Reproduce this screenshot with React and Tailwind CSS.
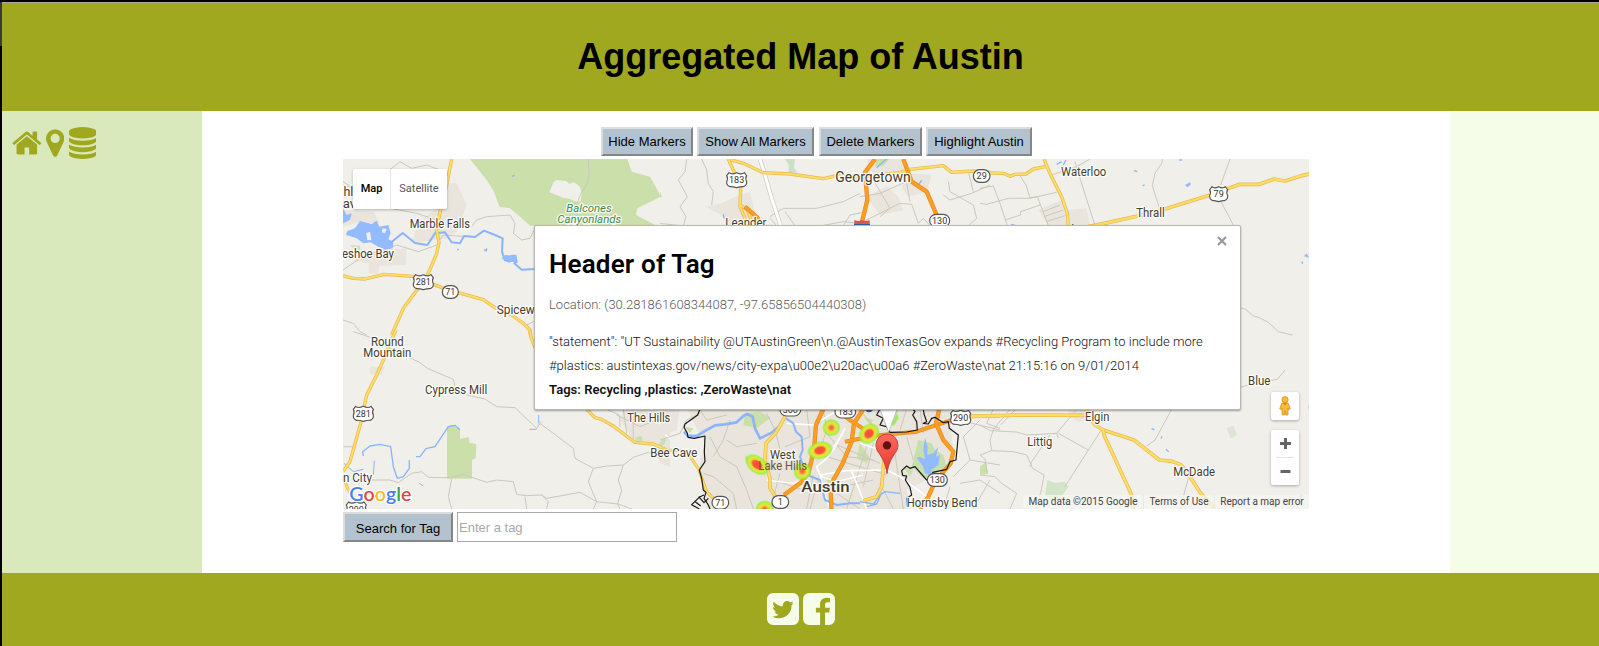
import React from "react";

const ICONS = {
  home: {
    box: "64 0 1664 1792",
    d: "M1472 992v480q0 26-19 45t-45 19h-384v-384h-256v384h-384q-26 0-45-19t-19-45v-480q0-1 .5-3t.5-3l575-474 575 474q1 2 1 6zm223-69l-62 74q-8 9-21 11h-3q-13 0-21-7l-692-577-692 577q-12 8-24 7-13-2-21-11l-62-74q-8-10-7-23.5t11-21.5l719-599q32-26 76-26t76 26l244 204v-195q0-14 9-23t23-9h192q14 0 23 9t9 23v408l219 182q10 8 11 21.5t-7 23.5z",
  },
  marker: {
    box: "384 0 1024 1792",
    d: "M1152 640q0-106-75-181t-181-75-181 75-75 181 75 181 181 75 181-75 75-181zm256 0q0 109-33 179l-364 774q-16 33-47.5 52t-67.5 19-67.5-19-46.5-52l-365-774q-33-70-33-179 0-212 150-362t362-150 362 150 150 362z",
  },
  database: {
    box: "128 0 1536 1792",
    d: "M896 768q237 0 443-43t325-127v170q0 69-103 128t-280 93.5-385 34.5-385-34.5-280-93.5-103-128v-170q119 84 325 127t443 43zm0 768q237 0 443-43t325-127v170q0 69-103 128t-280 93.5-385 34.5-385-34.5-280-93.5-103-128v-170q119 84 325 127t443 43zm0-384q237 0 443-43t325-127v170q0 69-103 128t-280 93.5-385 34.5-385-34.5-280-93.5-103-128v-170q119 84 325 127t443 43zm0-1152q208 0 385 34.5t280 93.5 103 128v128q0 69-103 128t-280 93.5-385 34.5-385-34.5-280-93.5-103-128v-128q0-69 103-128t280-93.5 385-34.5z",
  },
  twitter: {
    box: "128 128 1536 1536",
    d: "M1408 610q-56 25-121 34 68-40 93-117-65 38-134 51-61-66-153-66-87 0-148.5 61.5t-61.5 148.5q0 29 5 48-129-7-242-65t-192-155q-29 50-29 106 0 114 91 175-47-1-100-26v2q0 75 50 133.5t123 72.5q-29 8-51 8-13 0-39-4 21 63 74.5 104t121.5 42q-116 90-261 90-26 0-50-3 148 94 322 94 112 0 210-35.5t168-95 120.5-137 75-162 24.5-168.5q0-18-1-27 63-45 105-109zm256-194v960q0 119-84.5 203.5t-203.5 84.5h-960q-119 0-203.5-84.5t-84.5-203.5v-960q0-119 84.5-203.5t203.5-84.5h960q119 0 203.5 84.5t84.5 203.5z",
  },
  facebook: {
    box: "128 128 1536 1536",
    d: "M1376 128q119 0 203.5 84.5t84.5 203.5v960q0 119-84.5 203.5t-203.5 84.5h-188v-595h199l30-232h-229v-148q0-56 23.5-84t91.5-28l122-1v-207q-63-9-178-9-136 0-217.5 80t-81.5 226v171h-200v232h200v595h-532q-119 0-203.5-84.5t-84.5-203.5v-960q0-119 84.5-203.5t203.5-84.5h960z",
  },
};

function Icon({ name, className }) {
  return (
    <svg viewBox={ICONS[name].box} className={className} fill="currentColor">
      <path d={ICONS[name].d} />
    </svg>
  );
}

function Button({ children, className }) {
  return (
    <button
      className={
        "shrink-0 whitespace-nowrap border-2 border-t-[#dcdcdc] border-l-[#dcdcdc] border-r-[#868686] border-b-[#868686] bg-[#b2c3cf] text-center text-[13px] leading-none text-black " +
        className
      }
    >
      {children}
    </button>
  );
}

/* ---- map drawing helpers; the drawing uses three units per pixel ---- */

const Minor = ({ d, w = 3 }) => <path d={d} fill="none" stroke="#cdc8be" strokeWidth={w} strokeLinejoin="round" />;
const White = ({ d, w = 6 }) => <path d={d} fill="none" stroke="#ffffff" strokeWidth={w} strokeLinejoin="round" />;
const Water = ({ d, w = 5 }) => <path d={d} fill="none" stroke="#8ab4fb" strokeWidth={w} strokeLinejoin="round" />;
const Lake = ({ d }) => <path d={d} fill="#93bbff" />;
const Park = ({ d, fill = "#cadfaa" }) => <path d={d} fill={fill} />;
const Town = ({ d }) => <path d={d} fill="#e9e4dc" />;

function Road({ d, w = 10 }) {
  return (
    <g fill="none" strokeLinejoin="round">
      <path d={d} stroke="#e6b84f" strokeWidth={w} />
      <path d={d} stroke="#ffdc65" strokeWidth={w - 4} />
    </g>
  );
}

function Freeway({ d, w = 13 }) {
  return (
    <g fill="none" strokeLinejoin="round">
      <path d={d} stroke="#ea8a1b" strokeWidth={w} />
      <path d={d} stroke="#fa9e25" strokeWidth={w - 4} />
    </g>
  );
}

function Label({ x, y, w, size = 36, children, fill = "#453c2c", weight = 400, italic, anchor = "start" }) {
  return (
    <text
      x={x}
      y={y}
      textLength={w}
      lengthAdjust="spacingAndGlyphs"
      fontSize={size}
      fill={fill}
      fontWeight={weight}
      fontStyle={italic ? "italic" : "normal"}
      textAnchor={anchor}
      stroke="#ffffff"
      strokeOpacity="0.85"
      strokeWidth="8"
      strokeLinejoin="round"
      paintOrder="stroke"
    >
      {children}
    </text>
  );
}

function Oval({ x, y, w = 56, h = 38, children }) {
  return (
    <g>
      <rect x={x - w / 2} y={y - h / 2} width={w} height={h} rx={h / 2} fill="#fff" stroke="#555" strokeWidth="3.5" />
      <text x={x} y={y + 9} fontSize="27" fill="#333" textAnchor="middle">
        {children}
      </text>
    </g>
  );
}

function Shield({ x, y, w = 60, children }) {
  const a = w / 2;
  return (
    <g>
      <path
        transform={`translate(${x} ${y})`}
        d={`M${-a + 7} -22 Q${-a / 2} -15 0 -22 Q${a / 2} -15 ${a - 7} -22 L${a} -13 Q${a - 5} -5 ${a} 5 Q${a + 1} 16 ${a - 10} 20 Q${a / 2} 19 0 23 Q${-a / 2} 19 ${-a + 10} 20 Q${-a - 1} 16 ${-a} 5 Q${-a + 5} -5 ${-a} -13 Z`}
        fill="#fff"
        stroke="#555"
        strokeWidth="3.5"
      />
      <text x={x} y={y + 10} fontSize="27" fill="#333" textAnchor="middle">
        {children}
      </text>
    </g>
  );
}

const Heat = ({ x, y, rx = 26, ry = 26, r = 0, small }) => (
  <ellipse cx="0" cy="0" rx={rx} ry={ry} fill={small ? "url(#heatSmall)" : "url(#heat)"} transform={`translate(${x} ${y}) rotate(${r})`} />
);

function NorthWest() {
  return (
    <g transform="translate(-9 -12)">
      <Town d="M300 85L350 85L380 150L350 230L320 250L215 265L235 205L300 150Z" />
      <Town d="M9 165L100 170L120 205L60 200L9 215Z" />
      <Town d="M140 285L200 280L198 330L118 333L115 355L86 355L86 325L40 318L80 290Z" />
      <Park d="M390 12H862L875 50L930 65L955 110L962 125L892 160L888 180L950 212H570L545 190L510 160L478 155L462 110L440 75Z" />
      <path d="M628 112L640 82L650 75L678 78L688 86L703 82L720 95L725 120L722 138L712 142L690 132L668 128L655 122Z" fill="#f0efea" />
      <Minor d="M745 12L748 60L742 85L722 118L712 142L700 150L710 180L720 200" />
      <Minor d="M9 90L70 110M130 60L180 20L215 40L260 30L300 45M9 80L40 100M100 150L230 175L290 195" />
      <Minor d="M395 215L410 195L440 185L510 180L525 205L520 235L545 255L570 250L585 220" />
      <Minor d="M9 345L60 310L170 270L235 290L290 270L310 240L380 245" />
      <Minor d="M9 495L40 505L60 530L80 540M560 510L590 495" />
      <Lake d="M9 160L20 180L35 175L30 195L9 205ZM45 220L60 198L95 207L110 197L118 215L145 210L152 235L145 252L160 262L158 280L138 284L115 275L92 262L70 265L50 250L18 240L22 228Z" />
      <path d="M78 235L90 230L94 255L82 256ZM128 220L140 222L135 235L125 232Z" fill="#f0efea" />
      <Park d="M30 270L60 272L62 290L45 285Z" fill="#cbdfc9" />
      <Water w={6} d="M150 265L188 234L225 264L262 270L285 235L315 232L335 262L360 265L372 243L405 246L432 227L465 240L488 250L486 290L494 315L508 320L514 303L526 302L530 320L523 325L545 344L585 342" />
      <Lake d="M494 300L530 302L530 322L508 320L485 310L470 320L490 305Z" />
      <Water w={4} d="M352 286L356 282M432 286L440 282L438 290M516 64L524 61M582 450L586 446" />
      <Road d="M335 12L320 90L298 180L290 225L297 262L290 295L265 355L235 400L190 460L155 540" />
      <Road d="M9 362L40 370L75 372L132 358L220 364L280 388L320 403L430 434L468 460L515 480L550 505L570 525L572 540" />
    </g>
  );
}

function SouthWest() {
  return (
    <g transform="translate(-9 513)">
      <Town d="M90 110L135 110L125 135L90 132Z" />
      <Town d="M595 268L612 275L595 290L590 285Z" />
      <Town d="M850 238H990V410L960 400L950 340L880 330L840 270Z" />
      <Park d="M321 290L335 285L360 300V326L387 322L388 338L409 343L407 385L396 390V446H321Z" />
      <Minor d="M40 5L100 25L160 60L240 98L262 115L340 148L346 175L380 195L435 207L470 230L525 233L590 295L600 280L700 355L705 385L760 415L800 408L850 405L880 382L925 367L960 385" />
      <Minor d="M9 350L45 350M96 450L150 450L175 458L215 430L245 425L265 442L330 443L370 433L440 457L470 450L520 455L530 493L560 497L605 495L620 505L720 487L770 515L835 522L875 537" />
      <Minor d="M335 447L325 500L335 537M555 500L560 537M605 495L625 515L620 537M760 415L745 455L770 515L760 537M850 405L835 450L845 480L833 522L840 537" />
      <Water w={4} d="M70 378L68 365L90 348L120 343L152 350L160 410L172 445L190 440L208 415L208 390" />
      <Water w={4} d="M228 380L240 380L258 356L285 350L325 290L345 286L360 300" />
      <Water w={3} d="M103 392L100 435M12 400L40 425L70 418M238 460L250 468M596 255V280M568 298H590" />
      <Minor d="M800 238L838 255L840 290M850 238L860 310M880 238V330M830 255L900 290L950 270" w={3} />
      <Park d="M885 322L905 318L908 332L890 335ZM955 345L970 325L980 330L965 352Z" fill="#c7e0b3" />
      <Road d="M168 0L145 50L135 80L110 135L80 195L70 240L62 280L30 395L9 425" />
      <Road d="M9 440L25 480L45 510L65 537" w={9} />
      <Road d="M568 0L574 25L588 60M740 238L765 263L785 268L820 288L885 337L940 342L990 365" />
      <White d="M975 250L960 280L970 310L990 325" w={5} />
    </g>
  );
}

function North() {
  return (
    <g transform="translate(951 -12)">
      <Town d="M185 145L215 130L270 110L280 155L300 212H205L185 180L135 155Z" />
      <Town d="M620 12H730L745 45L640 60ZM620 125L680 95L715 125L730 165L660 180ZM745 55L815 60L800 110L745 125L725 100Z" />
      <Park d="M375 12H405L402 40L412 52L385 55L386 30Z" fill="#cbdfc9" />
      <Park d="M650 12H688L670 32L645 35ZM0 110L6 125L0 128Z" />
      <Minor d="M80 12L75 50L55 75L82 125L60 155L78 185L70 212M125 12L140 45L145 85L160 110L155 150" />
      <Minor d="M0 205L60 212M330 185L370 160L470 160L550 140L600 115M330 190L350 212M375 170L405 212M485 212L550 200L600 205L720 145L755 148L775 205L790 190L810 212" />
      <Minor d="M735 55L750 140M640 75L690 160L660 185M600 125L660 115L740 80M990 90L935 115L870 135L850 120M865 80L870 110L940 150L950 190L925 212M925 50L940 110M550 212L570 180L620 170" />
      <Minor d="M300 12L312 50L335 130L362 212" w={13} />
      <White d="M300 12L312 50L335 130L362 212" w={9} />
      <Water w={4} d="M650 38L672 18L680 12M190 178L192 190M775 90L785 76" />
      <Road d="M202 12L250 25L310 53L390 57L490 71L530 62L600 68L720 52L750 43L850 32L875 52L940 48L990 52" />
      <Road d="M205 12L222 50L242 100L240 155L255 190L258 212M242 150L262 165L280 212" />
      <Freeway d="M255 155L292 188L300 205" />
      <Freeway d="M645 12L615 52L622 135L606 200" />
      <Freeway d="M730 12L742 45L755 80L800 110L832 185" />
    </g>
  );
}

function NorthEast() {
  return (
    <g transform="translate(1911 -12)">
      <Town d="M175 165L245 135L260 165L320 160L330 212H205Z" />
      <Minor d="M0 100L40 93L60 145L82 212M0 145L20 148L85 130L150 130L230 112M75 195L122 180L122 170L180 150M120 62L138 90L150 128L172 125L205 212M215 60L290 35L330 12M285 20L300 70L338 190L345 212" />
      <Minor d="M548 12L545 25L525 55L517 92L540 165M750 12L722 90M722 138L760 210M190 170L240 150M192 185L250 165M198 200L255 182" />
      <Minor d="M780 458L797 463L818 482L838 488L865 502L895 530L938 540" />
      <Water w={4} d="M462 47L472 50M488 92L494 90M598 15L606 15M230 28L245 20M258 15L250 30M965 320L968 326M495 213H502" />
      <Lake d="M615 90L630 82L633 88L622 97ZM972 303L980 295L987 308L978 306ZM90 212L96 206L108 210L105 214Z" />
      <Road d="M0 52L70 55L90 64L105 58L138 57L160 42L195 35" />
      <Road d="M192 12L212 60L245 125L262 175L265 212" />
      <Road d="M325 215L360 208L470 184L555 162L690 120M740 102L780 88L838 88L882 72L915 78L965 62L990 57" w={11} />
    </g>
  );
}

function SouthEast() {
  return (
    <g transform="translate(1911 633)">
      <Town d="M260 110L330 118L325 150L295 155L270 140Z" />
      <Park d="M740 175L760 166L771 195L752 206Z" fill="#dce6d3" />
      <Park d="M202 330L225 338L255 335L265 350L230 400L195 375Z" fill="#d3e5c8" />
      <Park d="M0 290L18 275L24 312L0 315Z" />
      <Minor d="M0 165L30 182L110 186L140 195L230 190L235 205M40 180L55 160L90 118M105 120L62 165M235 190L325 240M230 190L290 118M210 195L155 275L150 290M0 255L35 242L100 245L140 255L158 295L192 315L185 355L170 417" />
      <Minor d="M325 240L365 178M325 240L255 350M35 242L30 210L40 180M0 315L45 320L65 340L110 370L90 417M15 270L22 310M0 255L18 270" />
      <Minor d="M575 118L525 210L500 228M625 325L610 380L600 417M780 52L805 45M870 32L892 28L915 0M987 105V118" />
      <Water w={4} d="M515 175L523 180M543 205L546 200M558 238L566 245M960 378H968" />
      <Road d="M0 138L120 135L325 136M318 118L330 145L345 165L370 180L462 210L538 270L577 274L602 284L625 312L660 367L705 417" w={11} />
      <Road d="M370 180L372 195L455 375L460 417" w={11} />
    </g>
  );
}

function Austin() {
  return (
    <g transform="translate(951 723)">
      <Town d="M80 27H870L880 180L800 240L740 270L750 327H140L115 210L135 130Z" />
      <Town d="M0 27H60L50 90L0 110Z" />
      <Park d="M255 40L300 35L332 52L290 85L250 75ZM600 130L628 170L620 190L590 175ZM690 27H715L705 75L690 70ZM500 240L520 230L530 265L505 260ZM75 80L100 85L90 100ZM730 200L760 210L750 230ZM255 165L270 180L260 195ZM610 50L640 60L630 75Z" />
      <Park d="M775 120L815 130L825 150L850 165L860 200L820 230L790 235L755 200L760 180Z" fill="#c6dfae" />
      <Minor w={3} d="M0 120L60 100L80 60L120 40M120 30L140 60L200 45M200 120L230 140L290 130M150 110L180 170L230 200L260 270L280 327M210 60L190 120L160 170M230 327L220 280L160 230L130 220M330 327L360 220" />
      <Minor w={3} d="M320 40L345 90L365 165M375 140L450 110M340 240L430 270M490 27L500 90L480 150M530 27L570 70M600 30L650 90M440 27L450 110M500 170L680 225M520 130L660 190M500 270L640 240M530 280L600 327M620 140L560 327M700 130L730 327M740 110L760 180M640 130L610 260M660 250L700 327M740 27L720 90M780 27L790 100M480 220L450 327M460 225L440 327M500 100L560 170L640 180" />
      <Minor w={3} d="M895 60L1020 90M880 230L930 180L1020 195M930 180L910 110L960 60M900 250L960 240L1020 280M870 260L850 327M940 327L990 240M1000 27L980 70L1020 85" />
      <White d="M380 70L460 75L540 27M555 85L520 150L500 175L470 200L480 225L560 212L680 210L720 230L760 260L800 290M480 225L490 270L510 327M540 115L520 140M575 215L610 300L620 327M600 130L660 150" w={5} />
      <White d="M470 205L485 230L530 245L610 225M320 240L400 250L450 230" w={4} />
      <Water w={8} d="M72 95L82 107L110 108L140 90L165 76L195 73L230 67L250 48L262 42L278 50L285 85L300 115L335 98L365 72" />
      <Water w={6} d="M378 55L400 70L408 95L425 110L428 150L420 170L430 200L440 225" />
      <Water w={6} d="M440 225L480 240L495 300L530 315L570 310L600 310" />
      <Water w={4} d="M650 300L660 285L675 275L720 280M665 278L650 312L620 320M600 305L640 312L650 300" />
      <Lake d="M795 113L803 140L802 165L820 160L835 140L828 170L840 165L835 195L815 210L812 225L795 220L790 200L775 180L770 172L782 172L795 178L790 150Z" />
      <Road d="M0 150L60 152L90 170L115 205L140 275L165 300L185 327" w={9} />
      <Road d="M375 50L350 95L318 130L315 180L330 235L330 265L350 295" w={11} />
      <Road d="M672 180L665 260L650 290L610 302" w={11} />
      <Freeway d="M490 27L468 75L462 150L445 220L420 250L372 285" />
      <Freeway d="M610 27L582 70L575 125L548 190L520 240L512 265L514 327" />
      <Freeway d="M555 50L600 80L620 95M555 125L640 108L690 102L765 96L870 62L895 56" w={12} />
      <Freeway d="M838 27L828 70L850 120L880 155L872 190L825 245L805 290L780 327" w={13} />
      <Road d="M930 49L1020 47" w={12} />
      <g fill="none" stroke="#151515" strokeWidth="3.500" strokeLinejoin="round">
        <path d="M120 27L113 45L75 72L72 82L82 100L84 112L103 115L135 108L133 155L135 185L118 210L125 235L130 270L138 277L132 295L145 315L150 327" />
        <path d="M132 285L120 290L95 314L118 327M116 290L132 308L145 295M104 304L122 318" />
        <path d="M660 27L650 45L670 55L660 75L680 80L690 97L740 96L772 90L770 65L758 45L765 35L758 27" />
        <path d="M790 27L792 42L800 65L790 70L805 72L815 55L825 52L850 68L865 65L868 85L895 105L888 180L870 185L860 208L818 217L820 225L800 240L765 200L750 205L740 198L725 212L728 226L740 228L736 240L750 262L755 285L740 295L742 320" />
      </g>
      <circle cx="627" cy="24" r="13" fill="#2d5da8" />
    </g>
  );
}

function MapArt() {
  return (
    <svg viewBox="0 0 2898 1050" className="block h-[350px] w-[966px]" fontFamily="Roboto, sans-serif">
      <defs>
        <radialGradient id="heat">
          <stop offset="0" stopColor="#f84a38" />
          <stop offset="0.34" stopColor="#f65a36" />
          <stop offset="0.5" stopColor="#f3d23a" />
          <stop offset="0.66" stopColor="#d8ee34" />
          <stop offset="0.82" stopColor="#98f02e" stopOpacity="0.8" />
          <stop offset="1" stopColor="#7df02e" stopOpacity="0" />
        </radialGradient>
        <radialGradient id="heatSmall">
          <stop offset="0" stopColor="#f65a40" />
          <stop offset="0.2" stopColor="#f57a3c" />
          <stop offset="0.4" stopColor="#efd144" />
          <stop offset="0.62" stopColor="#d0ee3a" />
          <stop offset="0.82" stopColor="#8ff02e" stopOpacity="0.8" />
          <stop offset="1" stopColor="#7df02e" stopOpacity="0" />
        </radialGradient>
        <linearGradient id="pin" x1="0" y1="0" x2="0" y2="1">
          <stop offset="0" stopColor="#fb6a5f" />
          <stop offset="1" stopColor="#e8362e" />
        </linearGradient>
      </defs>
      <rect width="2898" height="1050" fill="#f0efea" />
      <NorthWest />
      <SouthWest />
      <North />
      <NorthEast />
      <SouthEast />
      <Austin />

      <g transform="translate(-9 -12)">
        <Label x={-20} y={122} w={60}>ighl</Label>
        <Label x={8} y={158} w={40}>av</Label>
        <Label x={209} y={220} w={181}>Marble Falls</Label>
        <Label x={6} y={309} w={156}>eshoe Bay</Label>
        <Label x={470} y={477} w={175}>Spicewood</Label>
        <Label x={679} y={171} w={136} size={35} italic fill="#3f8b4a">Balcones</Label>
        <Label x={652} y={203} w={192} size={35} italic fill="#3f8b4a">Canyonlands</Label>
        <Label x={677} y={235} w={145} size={35} italic fill="#3f8b4a">National</Label>
        <Shield x={250} y={381}>281</Shield>
        <Oval x={331} y={411} w={48}>71</Oval>
      </g>
      <g transform="translate(-9 513)">
        <Label x={93} y={48} w={98}>Round</Label>
        <Label x={70} y={81} w={144}>Mountain</Label>
        <Label x={255} y={192} w={187}>Cypress Mill</Label>
        <Label x={862} y={276} w={129}>The Hills</Label>
        <Label x={931} y={381} w={141}>Bee Cave</Label>
        <Label x={9} y={456} w={87}>n City</Label>
        <Shield x={70} y={251}>281</Shield>
        <Shield x={49} y={538}>290</Shield>
      </g>
      <g transform="translate(951 -12)">
        <Label x={526} y={80} w={226} size={42}>Georgetown</Label>
        <Label x={196} y={216} w={123}>Leander</Label>
        <Shield x={230} y={75}>183</Shield>
        <Oval x={965} y={63} w={50}>29</Oval>
        <Oval x={839} y={197} w={60}>130</Oval>
        <path d="M583 195Q595 201 606 195Q617 201 629 195V206H583Z" fill="#d9534f" />
        <path d="M582 206H630V225H582Z" fill="#2d5da8" />
      </g>
      <g transform="translate(1911 -12)">
        <Label x={243} y={63} w={136}>Waterloo</Label>
        <Label x={469} y={186} w={85}>Thrall</Label>
        <Shield x={716} y={117} w={54}>79</Shield>
        <rect x="276" y="208" width="4" height="5" fill="#333" />
      </g>
      <g transform="translate(1911 633)">
        <Label x={315} y={153} w={73}>Elgin</Label>
        <Label x={142} y={228} w={75}>Littig</Label>
        <Label x={580} y={318} w={125}>McDade</Label>
        <Label x={804} y={45} w={67}>Blue</Label>
      </g>
      <g transform="translate(951 723)">
        <Heat small x={514} y={83} rx={28} ry={27} />
        <Heat x={480} y={151} rx={40} ry={28} r={-14} />
        <Heat x={291} y={194} rx={42} ry={27} r={38} />
        <Heat x={627} y={101} rx={36} ry={29} r={-45} />
        <Heat small x={427} y={214} rx={28} ry={28} />
        <Heat small x={314} y={328} rx={29} ry={28} />
        <Label x={330} y={177} w={76}>West</Label>
        <text x={295} y={210} textLength={146} lengthAdjust="spacingAndGlyphs" fontSize={36} fill="#6b5240">
          Lake Hills
        </text>
        <Label x={424} y={275} w={145} size={44} weight={500}>Austin</Label>
        <Label x={740} y={321} w={212}>Hornsby Bend</Label>
        <Oval x={391} y={29} w={62}>360</Oval>
        <Oval x={556} y={35} w={62}>183</Oval>
        <Oval x={181} y={308} w={50}>71</Oval>
        <Oval x={361} y={306} w={50}>1</Oval>
        <Oval x={832} y={240} w={60}>130</Oval>
        <Shield x={902} y={53}>290</Shield>
        <path d="M695 75L712 40L716 55L700 78Z" fill="#8cf02e" opacity="0.7" />
        <path d="M657 20L686 97L714 20Z" fill="#fff" stroke="#aaa" strokeWidth="2" />
        <path
          d="M681 221C677 190 668 178 660 164C652 154 648 146 648 135A33 33 0 0 1 714 135C714 146 710 154 702 164C694 178 685 190 681 221Z"
          fill="url(#pin)"
          stroke="#b53a34"
          strokeWidth="2.5"
        />
        <circle cx="681" cy="136" r="12.5" fill="#5c1410" />
      </g>

      <g transform="translate(-9 513)">
        <text
          x="28"
          y="512"
          textLength="186"
          lengthAdjust="spacingAndGlyphs"
          fontFamily="Lato, sans-serif"
          fontSize="57"
          fontWeight="600"
          stroke="#fff"
          strokeWidth="7"
          paintOrder="stroke"
          strokeLinejoin="round"
        >
          <tspan fill="#4a7ff0">G</tspan>
          <tspan fill="#e8453c">o</tspan>
          <tspan fill="#f8bb13">o</tspan>
          <tspan fill="#4a7ff0">g</tspan>
          <tspan fill="#35a554">l</tspan>
          <tspan fill="#e8453c">e</tspan>
        </text>
      </g>
    </svg>
  );
}

function MapControls() {
  return (
    <>
      <div className="absolute left-[10px] top-[10px] flex h-[40px] w-[94px] items-center rounded-xs bg-white text-[11px] shadow-[0_1px_3px_rgba(0,0,0,0.25)]">
        <div className="flex h-full w-[38px] items-center justify-center border-r border-[#e4e4e4] font-medium text-black">Map</div>
        <div className="flex-1 text-center text-[#565656]">Satellite</div>
      </div>
      <div className="absolute right-[10px] top-[233px] flex h-[28px] w-[28px] items-center justify-center rounded-xs bg-white shadow-[0_1px_3px_rgba(0,0,0,0.3)]">
        <svg viewBox="0 0 36 60" className="h-5 w-3">
          <path d="M8 22Q18 17 28 22L34 38L29 41L27 36V57H20L18 44L16 57H9V36L7 41L2 38Z" fill="#f9bb2b" stroke="#c98a2a" strokeWidth="2" />
          <path d="M12 21L18 28L24 21Z" fill="#e2741d" />
          <circle cx="18" cy="11" r="9.5" fill="#f9bb2b" stroke="#c98a2a" strokeWidth="2" />
        </svg>
      </div>
      <div className="absolute right-[10px] top-[271px] flex h-[55px] w-[28px] flex-col items-center rounded-xs bg-white text-[#666] shadow-[0_1px_3px_rgba(0,0,0,0.3)]">
        <svg viewBox="0 0 28 27" className="h-[27px] w-[28px]" fill="currentColor">
          <path d="M13 8h3v4h4v3h-4v4h-3v-4h-4v-3h4z" />
        </svg>
        <div className="h-px w-[18px] bg-[#e4e4e4]" />
        <svg viewBox="0 0 28 27" className="h-[27px] w-[28px]" fill="currentColor">
          <path d="M9.500 12h10v3h-10z" />
        </svg>
      </div>
      <div className="absolute bottom-0 right-0 flex h-[14px] items-center bg-[#f5f5f3]/75 text-[10px] leading-[14px] text-[#444]">
        <span className="w-[120px] whitespace-nowrap text-center">Map data ©2015 Google</span>
        <span className="w-[71px] whitespace-nowrap border-l border-[#e8e8e8] text-center">Terms of Use</span>
        <span className="w-[95px] whitespace-nowrap border-l border-[#e8e8e8] text-center">Report a map error</span>
      </div>
    </>
  );
}

function InfoWindow() {
  return (
    <div className="absolute left-[191px] top-[66px] h-[185px] w-[707px] rounded-xs border border-[#b9b7b2] bg-white pl-[14px] text-[13px] font-light text-[#111] shadow-[0_1px_2px_rgba(0,0,0,0.35)]">
      <svg viewBox="0 0 10 10" className="absolute right-[13px] top-[10px] h-[10px] w-[10px]">
        <path d="M1 1L9 9M9 1L1 9" stroke="#999" strokeWidth="2.2" />
      </svg>
      <h2 className="pt-[23px] text-[26px] font-semibold leading-[30px] tracking-[0.17px] text-black">Header of Tag</h2>
      <p className="pt-[14px] leading-6 text-[#5c5c5c]">Location: (30.281861608344087, -97.65856504440308)</p>
      <div className="pt-[13px] leading-6">
        <p className="whitespace-nowrap tracking-[0.028px]">
          "statement": "UT Sustainability @UTAustinGreen\n.@AustinTexasGov expands #Recycling Program to include more
        </p>
        <p className="whitespace-nowrap">
          #plastics: austintexas.gov/news/city-expa\u00e2\u20ac\u00a6 #ZeroWaste\nat 21:15:16 on 9/01/2014
        </p>
        <p className="font-semibold tracking-[0.05px] text-[#111]">Tags: Recycling ,plastics: ,ZeroWaste\nat</p>
      </div>
    </div>
  );
}

export default function App() {
  return (
    <div className="flex h-[646px] w-[1599px] flex-col overflow-hidden bg-black font-['Liberation_Sans',Arial,sans-serif]">
      <div className="h-[2px] shrink-0 bg-black" />
      <div className="flex min-h-0 flex-1">
        <div className="w-[2px] shrink-0 bg-black">
          <div className="h-[44px] bg-[#3a3a3a]" />
        </div>
        <div className="flex flex-1 flex-col">
          <header className="flex h-[109px] shrink-0 items-center justify-center border-t border-[#a9a99a] bg-[#9fa81f]">
            <h1 className="text-[36px] font-bold leading-none text-black">Aggregated Map of Austin</h1>
          </header>
          <div className="flex h-[462px] shrink-0">
            <nav className="flex w-[200px] items-start gap-[4.5px] bg-[#dae9bc] pl-[10px] pt-[15.500px] text-[#9fa81f]">
              <Icon name="home" className="h-8 w-[29.7px]" />
              <Icon name="marker" className="h-8 w-[18.3px]" />
              <Icon name="database" className="h-8 w-[27.4px]" />
            </nav>
            <main className="w-[1248px] bg-white pl-[141px] pt-[16px]">
              <div className="flex h-[32px] items-start pl-[258px]">
                <Button className="mr-[4px] h-[29px] w-[92px]">Hide Markers</Button>
                <Button className="mr-[5px] h-[29px] w-[117px]">Show All Markers</Button>
                <Button className="mr-[4px] h-[29px] w-[103px]">Delete Markers</Button>
                <Button className="h-[29px] w-[106px]">Highlight Austin</Button>
              </div>
              <div className="relative h-[350px] w-[966px] overflow-hidden font-['Roboto',sans-serif]">
                <MapArt />
                <MapControls />
                <InfoWindow />
              </div>
              <div className="flex items-start gap-[4px] pt-[3px]">
                <Button className="h-[30px] w-[110px] pt-[2px]">Search for Tag</Button>
                <input
                  placeholder="Enter a tag"
                  className="h-[30px] w-[220px] border border-[#a9a9a9] bg-white px-[1px] text-[13px] placeholder:text-[#a9a9a9]"
                />
              </div>
            </main>
            <aside className="flex-1 bg-[#f5fde9]" />
          </div>
          <footer className="flex flex-1 items-start justify-center gap-[4px] bg-[#9fa81f] pt-[20px] text-[#f5fde9]">
            <Icon name="twitter" className="h-8 w-8" />
            <Icon name="facebook" className="h-8 w-8" />
          </footer>
        </div>
      </div>
    </div>
  );
}
